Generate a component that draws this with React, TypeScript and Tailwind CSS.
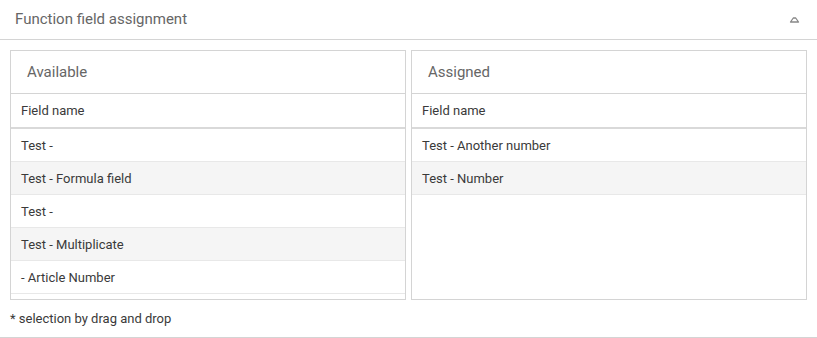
import React from "react";

const available = ["Test -", "Test - Formula field", "Test -", "Test - Multiplicate", "- Article Number"];
const assigned = ["Test - Another number", "Test - Number"];

function Panel({ title, rows }: { title: string; rows: string[] }) {
  return (
    <div className="flex-1 h-[250px] border border-[#d4d4d4] flex flex-col overflow-hidden bg-white">
      <div className="h-[43px] shrink-0 border-b border-[#d4d4d4] flex items-center pl-[16px] text-[15px] text-[#666666]">
        {title}
      </div>
      <div className="h-[35px] shrink-0 border-b-2 border-[#d9d9d9] flex items-center pl-[10px] text-[13px] text-[#3a3a3a]">
        Field name
      </div>
      <div className="flex-1 overflow-hidden">
        {rows.map((r, i) => (
          <div
            key={i}
            className={`h-[33px] border-b border-[#e8e8e8] flex items-center pl-[10px] pt-[1px] text-[13px] text-[#3a3a3a] ${
              i % 2 === 1 ? "bg-[#f5f5f5]" : "bg-white"
            }`}
          >
            {r}
          </div>
        ))}
      </div>
    </div>
  );
}

export default function App() {
  return (
    <div className="w-[817px] h-[338px] bg-white" style={{ fontFamily: "Roboto, 'Liberation Sans', sans-serif" }}>
      <div className="h-[40px] border-b border-[#d4d4d4] flex items-center justify-between pl-[15px] pr-[17px]">
        <span className="text-[15px] text-[#666666]">Function field assignment</span>
        <svg width="11" height="9" viewBox="0 0 11 9" className="mt-[-1px]">
          <path d="M1.5 7 L4.3 3 L6.7 3 L9.5 7 Z" fill="none" stroke="#888888" strokeWidth="1.3" strokeLinejoin="round" />
        </svg>
      </div>
      <div className="flex gap-[5px] pl-[10px] pr-[10px] pt-[10px]">
        <Panel title="Available" rows={available} />
        <Panel title="Assigned" rows={assigned} />
      </div>
      <div className="h-[38px] border-b border-[#d4d4d4] flex items-center pl-[10px] text-[13px] text-[#3a3a3a]">
        * selection by drag and drop
      </div>
    </div>
  );
}
